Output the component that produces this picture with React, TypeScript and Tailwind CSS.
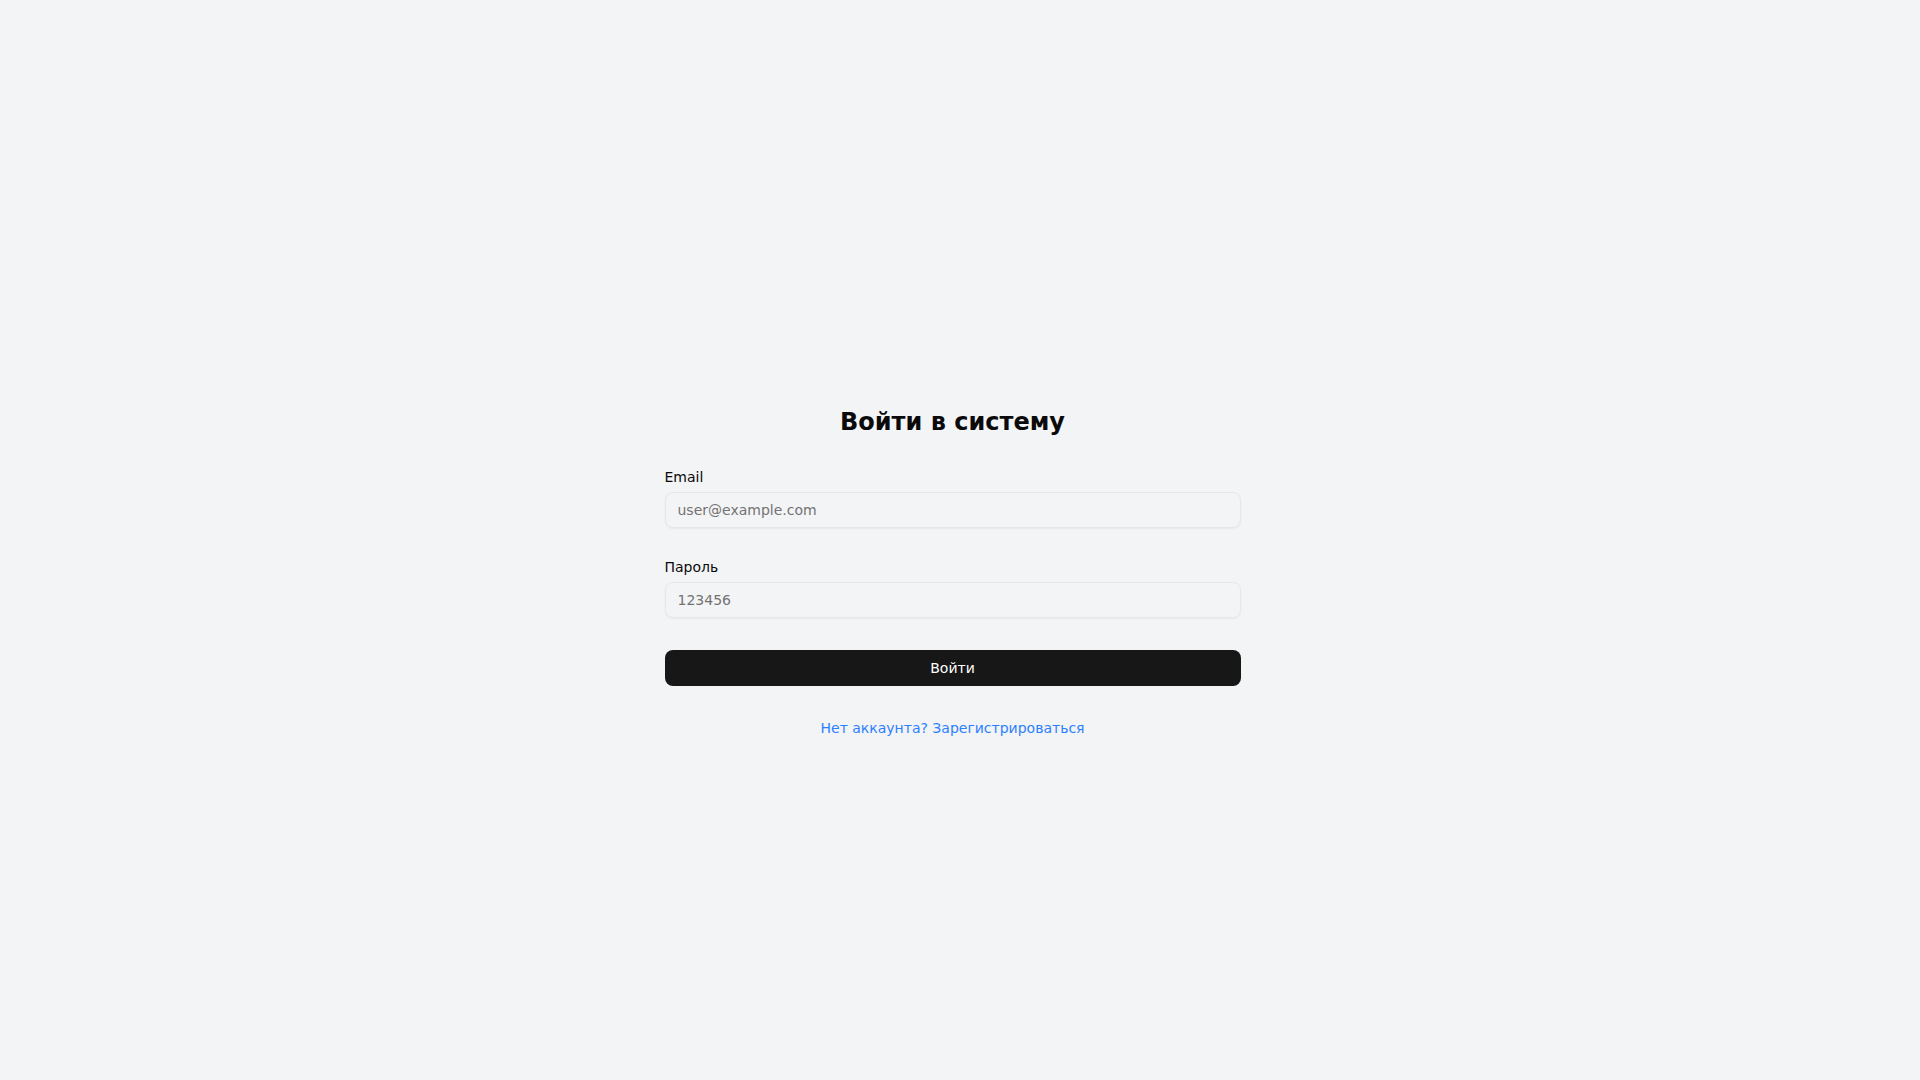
import React from "react";

const App = () => {
  return (
    <div className="bg-gray-100 py-8 pr-[15px] font-['DejaVu_Sans',sans-serif]">
      <div className="min-h-screen flex items-center justify-center">
        <div className="w-full max-w-xl">
          <h1 className="text-2xl font-bold text-center text-[#0a0a0a] mb-8">Войти в систему</h1>
          <form className="flex flex-col gap-8" onSubmit={(e) => e.preventDefault()}>
            <div className="flex flex-col gap-2">
              <label htmlFor="email" className="text-sm leading-none font-normal text-[#0a0a0a]">
                Email
              </label>
              <input
                id="email"
                type="email"
                placeholder="user@example.com"
                className="h-9 w-full rounded-lg border border-gray-200 bg-transparent px-3 text-sm shadow-xs outline-none placeholder:text-neutral-500"
              />
            </div>
            <div className="flex flex-col gap-2">
              <label htmlFor="password" className="text-sm leading-none font-normal text-[#0a0a0a]">
                Пароль
              </label>
              <input
                id="password"
                type="password"
                placeholder="123456"
                className="h-9 w-full rounded-lg border border-gray-200 bg-transparent px-3 text-sm shadow-xs outline-none placeholder:text-neutral-500"
              />
            </div>
            <button
              type="submit"
              className="h-9 w-full rounded-lg bg-[#171717] text-sm text-white"
            >
              Войти
            </button>
          </form>
          <p className="mt-8 text-center text-sm">
            <a href="#" className="text-blue-500">
              Нет аккаунта? Зарегистрироваться
            </a>
          </p>
        </div>
      </div>
    </div>
  );
};

export default App;
